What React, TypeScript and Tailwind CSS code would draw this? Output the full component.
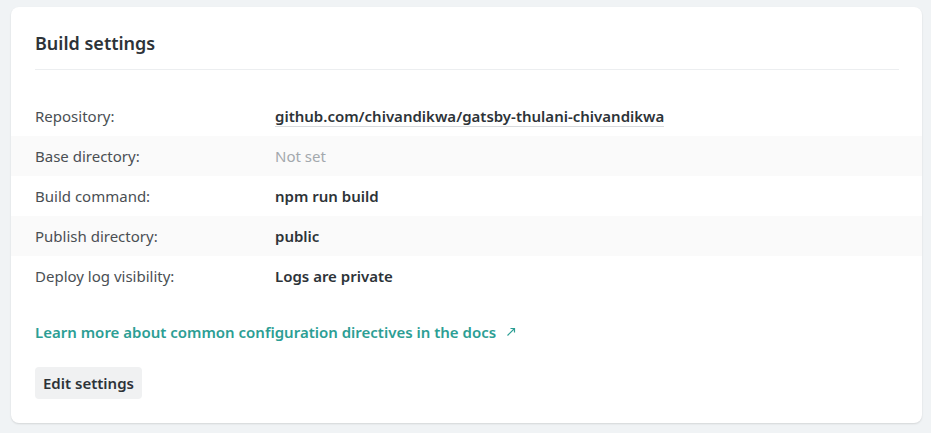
const rows = [
  { label: 'Repository:', value: 'github.com/chivandikwa/gatsby-thulani-chivandikwa', kind: 'link' },
  { label: 'Base directory:', value: 'Not set', kind: 'muted' },
  { label: 'Build command:', value: 'npm run build', kind: 'bold' },
  { label: 'Publish directory:', value: 'public', kind: 'bold' },
  { label: 'Deploy log visibility:', value: 'Logs are private', kind: 'bold' },
];

export default function App() {
  return (
    <div className="min-h-screen bg-[#f0f3f5] pl-[11px] pr-[9px] pt-[7px] pb-[11px] font-['Noto_Sans',sans-serif] text-[#2d3338]">
      <section className="rounded-lg bg-white pt-[22px] pb-[24px] shadow-[0_1px_2px_rgba(0,0,0,0.12)]">
        <div className="pl-6 pr-[23px]">
          <h2 className="border-b border-[#eceef0] pb-[12px] text-lg font-semibold leading-[28px] text-[#2d3338]">
            Build settings
          </h2>
        </div>
        <dl className="mt-[26px]">
          {rows.map((row, i) => (
            <div
              key={row.label}
              className={`flex h-10 items-center px-6 text-[15px] ${i % 2 === 1 ? 'bg-[#fafafa]' : ''}`}
            >
              <dt className="w-60 shrink-0 text-[#4a4f54]">{row.label}</dt>
              <dd>
                {row.kind === 'link' && (
                  <span className="border-b border-[#d7dadd] font-semibold text-[#2d3338]">{row.value}</span>
                )}
                {row.kind === 'muted' && <span className="text-[#a3a8ad]">{row.value}</span>}
                {row.kind === 'bold' && <span className="font-semibold text-[#2d3338]">{row.value}</span>}
              </dd>
            </div>
          ))}
        </dl>
        <div className="px-6">
          <a href="#" className="mt-[25px] inline-flex items-center gap-[10px] text-[15px] font-semibold text-[#2c9e94]">
            Learn more about common configuration directives in the docs
            <svg width="10" height="10" viewBox="0 0 10 10" fill="none" stroke="currentColor" strokeWidth="1.2">
              <path d="M1.5 8.5 8.5 1.5M4.5 1.5h4v4" />
            </svg>
          </a>
          <div className="mt-[23px]">
            <button className="rounded bg-[#f0f1f2] px-2 py-[6px] text-[15px] font-semibold leading-5 text-[#2d3338]">
              Edit settings
            </button>
          </div>
        </div>
      </section>
    </div>
  );
}
